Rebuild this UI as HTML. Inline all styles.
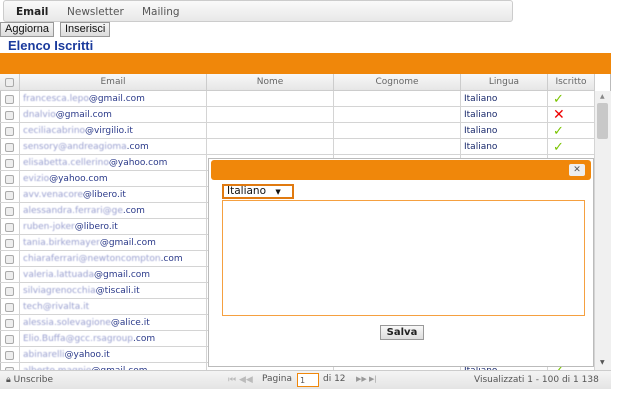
<!DOCTYPE html>
<html><head><meta charset="utf-8"><style>
*{box-sizing:border-box;margin:0;padding:0}
body{width:620px;height:400px;background:#fff;font-family:"DejaVu Sans","Liberation Sans",sans-serif;font-size:9px;position:relative;overflow:hidden}
.abs{position:absolute}
.tabs{left:3px;top:0;width:510px;height:22px;border:1px solid #ccc;border-radius:3px;background:linear-gradient(#fafafa,#e8e8e8)}
.tabs span{position:absolute;top:5px;font-size:10.5px;color:#555}
.btn{top:22px;height:15px;border:1px solid #999;background:linear-gradient(#f4f4f4,#dcdcdc);font-family:"Liberation Sans",sans-serif;font-size:11px;line-height:13px;padding:0 4px;color:#111}
.title{left:8px;top:38px;font-family:"Liberation Sans",sans-serif;font-weight:bold;font-size:13px;color:#1a3a9c}
.grid{left:0;top:53px;width:611px;height:336px;border:1px solid #bbb}
.oh{left:0;top:53px;width:611px;height:21px;background:#f0870a}
.hdr{left:0;top:74px;width:595px;height:17px;background:linear-gradient(#f8f8f8,#e6e6e6);border-bottom:1px solid #ccc}
.hdr div{position:absolute;top:0;height:17px;line-height:16px;text-align:center;color:#666;border-right:1px solid #ccc}
.row{position:absolute;left:0;width:595px;height:16px;border-bottom:1px solid #d4d4d4}
.row div{position:absolute;top:0;height:16px;line-height:17px;border-right:1px solid #d4d4d4;padding-left:3px}
.cb{width:9px;height:9px;border:1px solid #aaa;border-radius:2px;background:#eee;position:absolute;left:5px;top:4px}
.em{color:#2b3a8a}.bl{color:#9aa0d0;filter:blur(.6px)}
.it{color:#1a2a6c}
.ok{color:#7ac400;font-weight:bold;font-size:13px}
.no{color:#e00;font-size:14px}
.sb{left:595px;top:91px;width:16px;height:279px;background:#f0f0f0}
.foot{left:0;top:370px;width:611px;height:19px;background:linear-gradient(#f4f4f4,#e4e4e4);border-top:1px solid #ccc;color:#555;font-size:9px}
.dlg{left:208px;top:158px;width:386px;height:209px;background:#fff;border:1px solid #bbb}
</style></head><body>
<div class="abs tabs"><span style="left:12px;font-weight:bold;color:#222">Email</span><span style="left:63px">Newsletter</span><span style="left:138px">Mailing</span></div>
<div class="abs btn" style="left:0">Aggiorna</div>
<div class="abs btn" style="left:60px">Inserisci</div>
<div class="abs title">Elenco Iscritti</div>
<div class="abs grid"></div>
<div class="abs oh"></div>
<div class="abs hdr">
<div style="left:0;width:20px"><span class="cb"></span></div>
<div style="left:20px;width:187px">Email</div>
<div style="left:207px;width:127px">Nome</div>
<div style="left:334px;width:127px">Cognome</div>
<div style="left:461px;width:87px">Lingua</div>
<div style="left:548px;width:47px">Iscritto</div>
</div>
<div id="rows"></div>
<div class="abs sb"><div class="abs" style="left:2px;top:12px;width:11px;height:36px;background:#c8c8c8;border-radius:2px"></div><div class="abs" style="left:5px;top:2px;font-size:6px;color:#888">▲</div><div class="abs" style="left:5px;top:268px;font-size:6px;color:#555">▼</div></div>
<div class="abs foot">
<span class="abs" style="left:6px;top:4px">🔒︎ Unscribe</span>
<span class="abs" style="left:228px;top:4px;color:#bbb">⏮ ◀◀</span>
<span class="abs" style="left:262px;top:3px">Pagina</span>
<span class="abs" style="left:297px;top:2px;width:22px;height:14px;border:1px solid #f0870a;background:#fff;font-size:8px;padding:2px">1</span>
<span class="abs" style="left:323px;top:3px">di 12</span>
<span class="abs" style="left:356px;top:4px;color:#999;font-size:7px">▶▶ ▶|</span>
<span class="abs" style="left:474px;top:4px">Visualizzati 1 - 100 di 1 138</span>
</div>
<div class="abs dlg">
<div class="abs" style="left:2px;top:1px;width:380px;height:20px;background:#f0870a;border-radius:3px"></div>
<div class="abs" style="left:360px;top:5px;width:16px;height:12px;background:#eee;border-radius:2px;font-size:9px;text-align:center;line-height:12px;color:#555;font-weight:bold">✕</div>
<div class="abs" style="left:13px;top:25px;width:72px;height:15px;border:2px solid #e07a10;font-size:10.5px;line-height:11px;padding-left:3px;color:#111">Italiano <span style="font-size:7px;margin-left:6px">▼</span></div>
<div class="abs" style="left:13px;top:41px;width:363px;height:116px;border:1px solid #f5a040"></div>
<div class="abs" style="left:171px;top:166px;width:44px;height:15px;border:1px solid #999;background:linear-gradient(#f8f8f8,#ddd);font-size:10px;font-weight:bold;text-align:center;line-height:13px;color:#222">Salva</div>
</div>
<script>
var e=[["francesca.lepo","@gmail.com"],["dnalvio","@gmail.com"],["ceciliacabrino","@virgilio.it"],["sensory@andreagioma",".com"],["elisabetta.cellerino","@yahoo.com"],["evizio","@yahoo.com"],["avv.venacore","@libero.it"],["alessandra.ferrari@ge",".com"],["ruben-joker","@libero.it"],["tania.birkemayer","@gmail.com"],["chiaraferrari@newtoncompton",".com"],["valeria.lattuada","@gmail.com"],["silviagrenocchia","@tiscali.it"],["tech@rivalta.it",""],["alessia.solevagione","@alice.it"],["Elio.Buffa@gcc.rsagroup",".com"],["abinarelli","@yahoo.it"],["alberto.magnio","@gmail.com"]];
var h="";
for(var i=0;i<e.length;i++){var t=91+i*16;var l=i<4||i==17?'<span class="it">Italiano</span>':'';var s=i<4||i==17?(i==1?'<span class="no">✕</span>':'<span class="ok">✓</span>'):'';
h+='<div class="row" style="top:'+t+'px"><div style="left:0;width:20px"><span class="cb"></span></div><div class="em" style="left:20px;width:187px"><span class="bl">'+e[i][0]+'</span>'+e[i][1]+'</div><div style="left:207px;width:127px"></div><div style="left:334px;width:127px"></div><div style="left:461px;width:87px">'+l+'</div><div style="left:548px;width:47px;padding-left:5px">'+s+'</div></div>';}
document.getElementById("rows").innerHTML=h;
</script>
</body></html>
